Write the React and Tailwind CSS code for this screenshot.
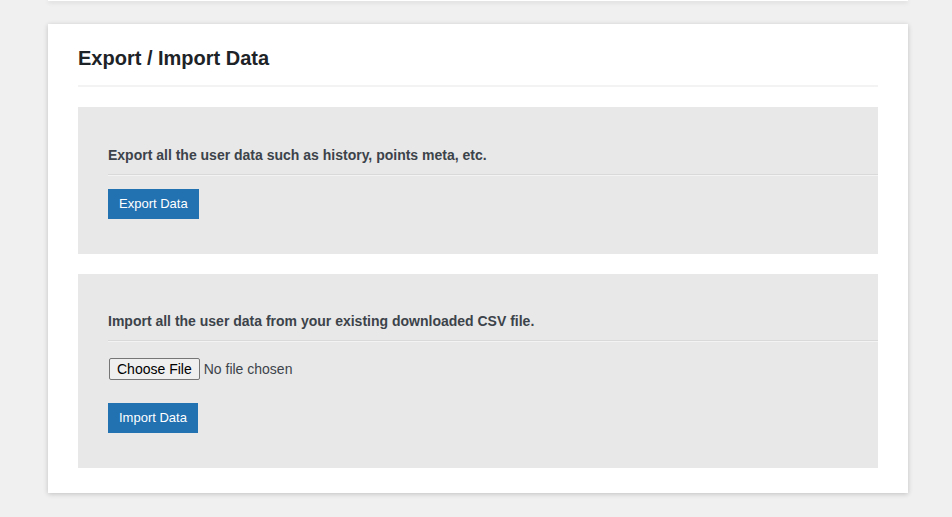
const Section = ({ text, top = "pt-[38px]", children }) => (
  <div className={`bg-[#e8e8e8] pl-[30px] pb-[35px] ${top}`}>
    <h3 className="text-[14px] leading-[20px] font-bold text-[#3c434a] pb-[9px]">{text}</h3>
    <div className="h-px bg-[#d9d9d9]"></div>
    <div className="h-px bg-[#f3f3f3]"></div>
    {children}
  </div>
);

const BlueButton = ({ label }) => (
  <button className="h-[30px] px-[11px] bg-[#2271b1] text-white text-[13px] leading-[28px]">
    {label}
  </button>
);

export default function App() {
  return (
    <div className="min-h-screen bg-[#f0f0f0] font-['Liberation_Sans',Arial,sans-serif] pb-[25px]">
      <div className="ml-[48px] w-[860px]">
        {/* bottom edge of the previous card */}
        <div className="h-px bg-white shadow-[0_1px_4px_rgba(0,0,0,0.25)]"></div>

        <div className="mt-[23px] bg-white shadow-[0_1px_5px_rgba(0,0,0,0.2)] px-[30px] pt-[22px] pb-[25px]">
          <h2 className="text-[20px] leading-[24px] font-bold text-[#1d2327]">Export / Import Data</h2>
          <div className="mt-[15px] h-[2px] bg-[#f3f3f3]"></div>

          <div className="mt-[20px] flex flex-col gap-[20px]">
            <Section text="Export all the user data such as history, points meta, etc.">
              <div className="mt-[13px]">
                <BlueButton label="Export Data" />
              </div>
            </Section>

            <Section top="pt-[37px]" text="Import all the user data from your existing downloaded CSV file.">
              <label className="mt-[16px] flex items-center gap-[4px] text-[14px] cursor-pointer w-max">
                <input type="file" accept=".csv" className="hidden" />
                <span className="ml-px h-[22px] px-[7px] flex items-center border border-[#767676] rounded-[2px] bg-[#efefef] text-black">
                  Choose File
                </span>
                <span className="text-[#3c434a]">No file chosen</span>
              </label>
              <div className="mt-[23px]">
                <BlueButton label="Import Data" />
              </div>
            </Section>
          </div>
        </div>
      </div>
    </div>
  );
}
